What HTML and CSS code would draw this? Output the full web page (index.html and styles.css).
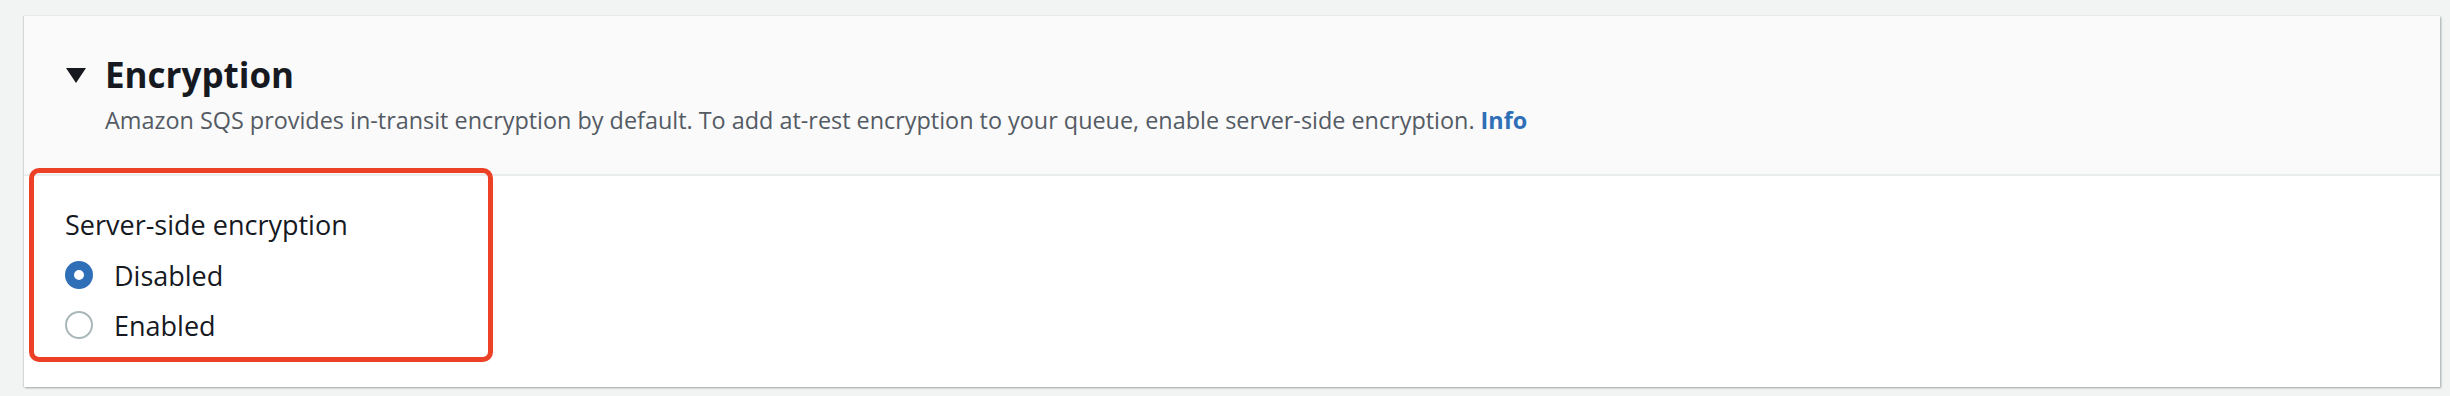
FILE: index.html
```html
<!DOCTYPE html>
<html>

<head>
    <title>Encryption</title>
    <link rel="stylesheet" href="styles.css">
</head>

<body>
    <div class="container">
        <div class="header">
            <h2 class="title">
                <span class="caret"></span>
                Encryption
            </h2>
            <p class="description">
                Amazon SQS provides in-transit encryption by default. To add at-rest encryption to your queue, enable server-side encryption.
                <a class="info" href="#">Info</a>
            </p>
        </div>
        <div class="content">
            <div class="highlight">
                <div class="field-label">Server-side encryption</div>
                <label class="radio">
                    <span class="radio-control checked"></span>
                    Disabled
                </label>
                <label class="radio">
                    <span class="radio-control"></span>
                    Enabled
                </label>
            </div>
        </div>
    </div>
</body>

</html>
```

FILE: styles.css
```css
body {
    margin: 0;
    padding: 16px 10px 9px 24px;
    background-color: #f2f3f3;
    font-family: 'Open Sans', sans-serif;
    color: #16191f;
}

.container {
    background-color: #fff;
    box-shadow: 1px 1px 2px 0 rgba(0, 28, 36, 0.35), -1px 0 1px 0 rgba(0, 28, 36, 0.1);
    height: 371px;
}

.header {
    background-color: #fafafa;
    border-bottom: 2px solid #eaeded;
    padding: 34px 40px 0 42px;
    box-sizing: border-box;
    height: 160px;
}

.title {
    display: flex;
    align-items: center;
    margin: 0;
    font-size: 35px;
    font-weight: 700;
    line-height: 50px;
}

.caret {
    width: 0;
    height: 0;
    border-left: 10px solid transparent;
    border-right: 10px solid transparent;
    border-top: 15px solid #16191f;
    margin-right: 19px;
}

.description {
    margin: 4px 0 0 39px;
    font-size: 23.4px;
    line-height: 32px;
    color: #545b64;
}

.info {
    color: #2f6fb7;
    font-weight: 700;
    text-decoration: none;
}

.content {
    padding: 0 5px;
}

.highlight {
    width: 423px;
    height: 184px;
    margin-top: -8px;
    border: 5px solid #ec4127;
    border-radius: 10px;
    padding: 0 0 0 31px;
    box-sizing: content-box;
}

.field-label {
    margin-top: 32px;
    margin-bottom: 5px;
    font-size: 27px;
    line-height: 40px;
}

.radio {
    display: flex;
    align-items: center;
    height: 50px;
    font-size: 27px;
}

.radio-control {
    width: 24px;
    height: 24px;
    border: 2px solid #aab7b8;
    border-radius: 50%;
    margin-right: 21px;
    box-sizing: content-box;
}

.radio-control.checked {
    width: 10px;
    height: 10px;
    border: 9px solid #2f6fb7;
}
```
